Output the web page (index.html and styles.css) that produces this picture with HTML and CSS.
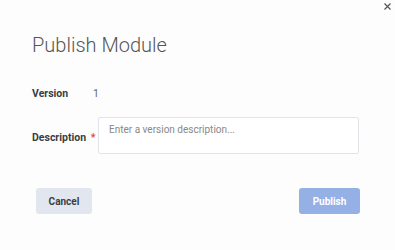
FILE: index.html
```html
<!DOCTYPE html>
<html lang="en">
<head>
  <meta charset="UTF-8">
  <title>Publish Module</title>
  <link rel="stylesheet" href="styles.css">
</head>
<body>
  <div class="dialog">
    <div class="close-row">
      <button class="close" aria-label="Close">
        <svg width="7" height="7" viewBox="0 0 7 7"><path d="M0.5 0.5 L6.5 6.5 M6.5 0.5 L0.5 6.5" stroke="#555" stroke-width="1.2"/></svg>
      </button>
    </div>
    <h1>Publish Module</h1>
    <div class="form">
      <div class="row">
        <span class="label">Version</span>
        <span class="value">1</span>
      </div>
      <div class="row desc-row">
        <span class="label">Description <span class="req">*</span></span>
        <textarea placeholder="Enter a version description..."></textarea>
      </div>
    </div>
    <div class="actions">
      <button class="btn cancel">Cancel</button>
      <button class="btn publish" disabled>Publish</button>
    </div>
  </div>
</body>
</html>
```

FILE: styles.css
```css
body {
  margin: 0;
  background: #fdfdfd;
  font-family: Roboto, "Liberation Sans", sans-serif;
  color: #333;
}
.dialog {
  width: 395px;
  height: 250px;
  box-sizing: border-box;
  padding: 0 35px 0 32px;
}
.close-row {
  display: flex;
  justify-content: flex-end;
  margin-right: -31px;
  padding-top: 3px;
  height: 10px;
}
.close {
  background: none;
  border: none;
  padding: 0;
  width: 7px;
  height: 7px;
  display: flex;
}
h1 {
  margin: 20px 0 0;
  font-weight: 300;
  font-size: 20px;
  line-height: 24px;
  color: #555;
}
.form {
  margin-top: 30px;
}
.row {
  display: flex;
  align-items: center;
  font-size: 10.5px;
}
.label {
  width: 61px;
  font-weight: 700;
  color: #3a3d42;
  flex-shrink: 0;
}
.value {
  color: #666;
}
.req {
  color: #e0474c;
  margin-left: 2px;
}
.desc-row {
  margin-top: 17px;
  align-items: flex-start;
}
.desc-row .label {
  width: 66px;
  margin-top: 14px;
}
textarea {
  width: 261px;
  height: 37px;
  box-sizing: border-box;
  border: 1px solid #e1e5ea;
  border-radius: 2px;
  padding: 6px 10px;
  font-family: Roboto, "Liberation Sans", sans-serif;
  font-size: 10px;
  resize: none;
  background: #fff;
}
textarea::placeholder {
  color: #888;
}
.actions {
  display: flex;
  justify-content: space-between;
  margin-top: 34px;
  padding-left: 4px;
}
.btn {
  border: none;
  border-radius: 3px;
  height: 26px;
  font-family: Roboto, "Liberation Sans", sans-serif;
  font-size: 10px;
  font-weight: 700;
}
.cancel {
  width: 56px;
  background: #e2e7ef;
  color: #3a3f47;
}
.publish {
  width: 61px;
  background: #95b0e4;
  color: #fff;
}
```
